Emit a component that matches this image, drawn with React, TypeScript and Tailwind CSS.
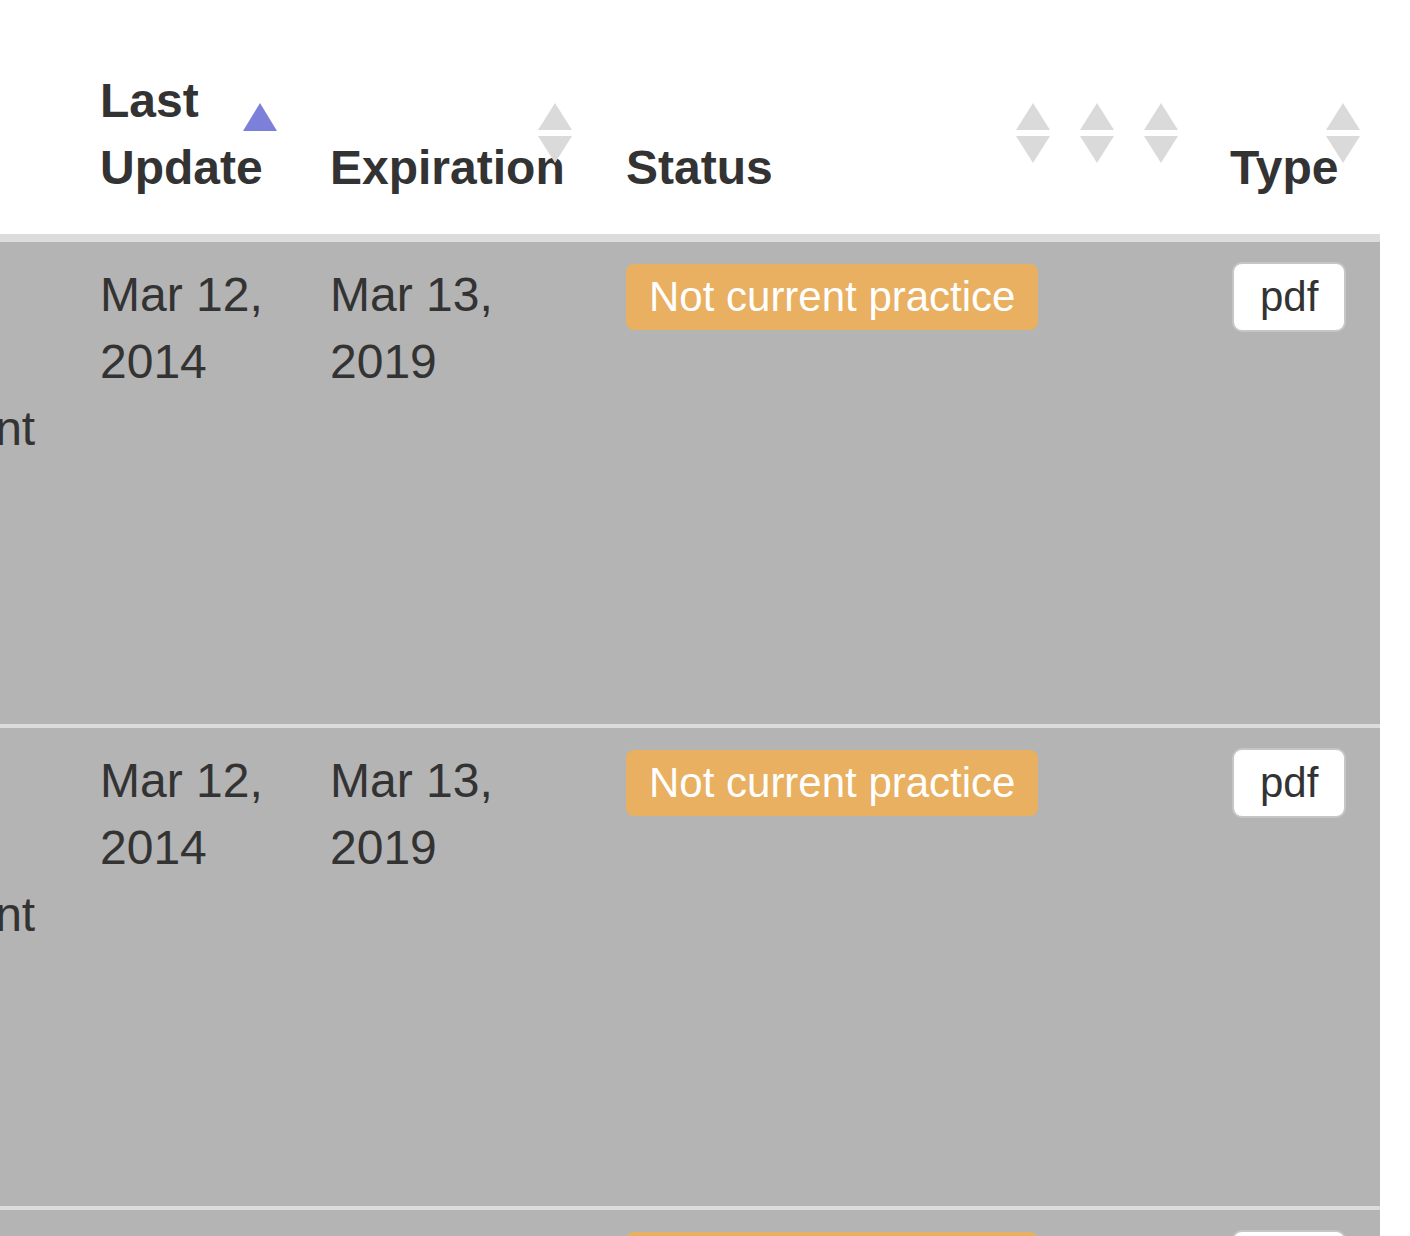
import React from "react";

type Row = {
  title: string[];
  updated: string[];
  expires: string[];
  status: string;
  type: string;
};

const rows: Row[] = [
  {
    title: ["", "", "Management"],
    updated: ["Mar 12,", "2014"],
    expires: ["Mar 13,", "2019"],
    status: "Not current practice",
    type: "pdf",
  },
  {
    title: ["", "", "Management"],
    updated: ["Mar 12,", "2014"],
    expires: ["Mar 13,", "2019"],
    status: "Not current practice",
    type: "pdf",
  },
  {
    title: ["", "", "Management"],
    updated: ["Mar 12,", "2014"],
    expires: ["Mar 13,", "2019"],
    status: "Not current practice",
    type: "pdf",
  },
];

const cols = "grid grid-cols-[100px_230px_296px_374px_64px_64px_102px_150px]";

function SortBoth({ className }: { className: string }) {
  return (
    <svg className={`absolute blur-[0.6px] ${className}`} width="34" height="60" viewBox="0 0 34 60">
      <polygon points="17,0 34,27 0,27" fill="#dadada" />
      <polygon points="0,33 34,33 17,60" fill="#dadada" />
    </svg>
  );
}

function SortAsc({ className }: { className: string }) {
  return (
    <svg className={`absolute blur-[0.6px] ${className}`} width="34" height="60" viewBox="0 0 34 60">
      <polygon points="17,0 34,28 0,28" fill="#7d80d9" />
    </svg>
  );
}

function Lines({ lines }: { lines: string[] }) {
  return (
    <div>
      {lines.map((l, i) => (
        <div key={i} className="h-[67px] whitespace-nowrap">
          {l}
        </div>
      ))}
    </div>
  );
}

export default function App() {
  return (
    <div className="h-screen w-full overflow-hidden bg-white font-['Liberation_Sans',Arial,sans-serif] text-[48px] leading-[67px] text-[#333333]">
      {/* header */}
      <div className={`${cols} w-[1380px] pt-[67px] pb-[33px] border-b-8 border-[#dcdcdc] font-bold`}>
        <div className="relative" />
        <div className="relative flex flex-col justify-end">
          <div>Last</div>
          <div>Update</div>
          <SortAsc className="left-[143px] top-[36px]" />
        </div>
        <div className="relative flex flex-col justify-end">
          <div>Expiration</div>
          <SortBoth className="left-[208px] top-[36px]" />
        </div>
        <div className="relative flex flex-col justify-end">
          <div>Status</div>
        </div>
        <div className="relative">
          <SortBoth className="left-[16px] top-[36px]" />
        </div>
        <div className="relative">
          <SortBoth className="left-[16px] top-[36px]" />
        </div>
        <div className="relative">
          <SortBoth className="left-[16px] top-[36px]" />
        </div>
        <div className="relative flex flex-col justify-end">
          <div>Type</div>
          <SortBoth className="left-[96px] top-[36px]" />
        </div>
      </div>

      {/* body */}
      {rows.map((r, i) => (
        <div
          key={i}
          className={`${cols} w-[1380px] h-[482px] pt-[19px] bg-[#b4b4b4] ${i > 0 ? "border-t-4 border-[#dcdcdc]" : ""}`}
        >
          <div className="overflow-hidden">
            <div className="ml-[-245px]">
              <Lines lines={r.title} />
            </div>
          </div>
          <Lines lines={r.updated} />
          <Lines lines={r.expires} />
          <div>
            <span className="mt-[2px] inline-flex h-[66px] items-center whitespace-nowrap rounded-lg bg-[#e8b060] px-[23px] text-[42px] leading-none text-white">
              {r.status}
            </span>
          </div>
          <div />
          <div />
          <div />
          <div>
            <span className="ml-[2px] inline-flex h-[70px] items-center rounded-[10px] border-2 border-[#c6c6c6] bg-white px-[26px] text-[42px] leading-none text-[#333333]">
              {r.type}
            </span>
          </div>
        </div>
      ))}
    </div>
  );
}
